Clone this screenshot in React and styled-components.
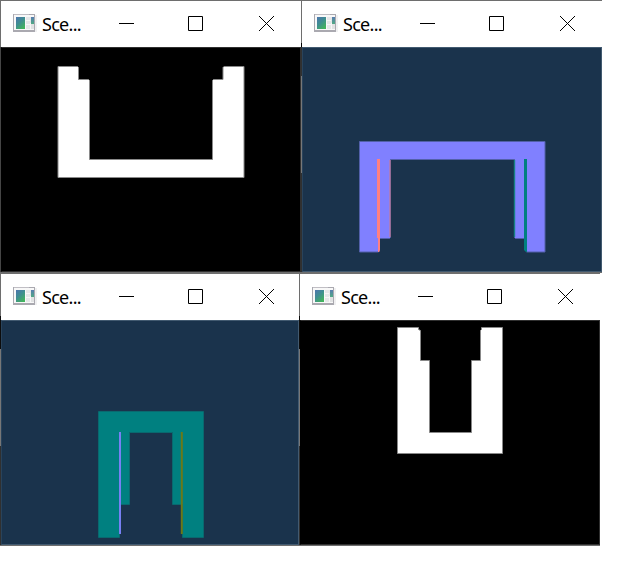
import React from 'react';
import styled, { createGlobalStyle } from 'styled-components';

const GlobalStyle = createGlobalStyle`
  body { margin: 0; background: #fff; }
`;

const Desktop = styled.main`
  display: flex;
  flex-direction: column;
  width: 620px;
  height: 572px;
  overflow: hidden;
  background: #fff;
`;

const WindowRow = styled.div`
  display: flex;
  height: 273px;
`;

const WindowFrame = styled.section`
  display: grid;
  grid-template-columns: 1px 1fr;
  box-sizing: border-box;
  width: ${({ $width }) => $width}px;
  height: 273px;
  border-top: 1px solid #6e6e6e;
  border-bottom: 1px solid ${({ $bottom }) => $bottom};
`;

const LeftEdge = styled.div`
  background: ${({ $edge }) => $edge};
`;

const WindowBody = styled.div`
  display: flex;
  flex-direction: column;
  min-width: 0;
`;

const TitleBar = styled.header`
  display: flex;
  align-items: flex-start;
  height: 46px;
  background: #fff;
`;

const AppIcon = styled.svg`
  flex: none;
  width: 24px;
  height: 19px;
  margin: 13px 5px 0 12px;
`;

const Title = styled.h1`
  flex: none;
  width: 77px;
  margin: 11px 0 0;
  font: 400 18px/25px 'Noto Sans', 'Open Sans', sans-serif;
  letter-spacing: -0.7px;
  color: #000;
`;

const Caption = styled.div`
  display: grid;
  grid-template-columns: 69px 71px 16px;
  margin-top: 15px;
`;

const CaptionIcon = styled.svg`
  display: block;
  width: 15px;
  height: 15px;
  fill: none;
  stroke: #000;
`;

const Canvas = styled.div`
  box-sizing: border-box;
  height: 225px;
  background: ${({ $dark }) => ($dark ? '#000' : '#1a334c')};
  border: 1px solid ${({ $dark }) => ($dark ? '#303030' : '#425a70')};
  border-left-color: ${({ $dark }) => ($dark ? '#000' : '#29435b')};
`;

const Drawing = styled.svg`
  display: block;
  width: 100%;
  height: 100%;
`;

function SceneIcon({ id }) {
  return (
    <AppIcon viewBox="0 0 24 19" shapeRendering="crispEdges">
      <defs>
        <linearGradient id={`${id}-view`} x1="0" y1="0" x2="0.7" y2="1">
          <stop offset="0" stopColor="#4d74ae" />
          <stop offset="0.5" stopColor="#3f8e91" />
          <stop offset="1" stopColor="#42b35d" />
        </linearGradient>
        <linearGradient id={`${id}-side`} x1="0" y1="0" x2="0" y2="1">
          <stop offset="0" stopColor="#577cb0" />
          <stop offset="1" stopColor="#50aa83" />
        </linearGradient>
      </defs>
      <rect x="22" y="1" width="2" height="17" fill="#f0f0f1" />
      <rect x="0" y="0" width="22" height="18" fill="#aaa9b0" />
      <rect x="1" y="1" width="20" height="15" fill="#f8f8f8" />
      <rect x="1" y="0" width="15" height="1" fill="#c0bec4" />
      <rect x="3" y="3" width="9" height="12" fill={`url(#${id}-view)`} />
      <rect x="13" y="3" width="5" height="12" fill="#e5e7e8" />
      <path d="M13 6.5h4M13 10.5h5M17.5 9v6" stroke="#f7f7f7" />
      <rect x="18" y="3" width="3" height="7" fill={`url(#${id}-side)`} />
      <rect x="18" y="10" width="3" height="5" fill="#e1e2e3" />
    </AppIcon>
  );
}

function CaptionButtons() {
  return (
    <Caption>
      <CaptionIcon viewBox="0 0 15 15"><path d="M0 7.5H15" /></CaptionIcon>
      <CaptionIcon viewBox="0 0 15 15"><path d="M.5 .5h14v14H.5z" /></CaptionIcon>
      <CaptionIcon viewBox="0 0 15 15"><path d="M0 0 15 15M15 0 0 15" /></CaptionIcon>
    </Caption>
  );
}

function SceneWindow({ id, width = 301, dark, edge, bottom = '#6e6e6e', view, children }) {
  return (
    <WindowFrame $width={width} $bottom={bottom}>
      <LeftEdge $edge={edge} />
      <WindowBody>
        <TitleBar>
          <SceneIcon id={id} />
          <Title>Sce...</Title>
          <CaptionButtons />
        </TitleBar>
        <Canvas $dark={dark}>
          <Drawing viewBox={view}>{children}</Drawing>
        </Canvas>
      </WindowBody>
    </WindowFrame>
  );
}

const plainEdge = 'linear-gradient(#6e6e6e 46px, #454545 46px)';
const upperEdge =
  'linear-gradient(#6e6e6e 42px, #000 42px 46px, #303030 46px 75px, #777 75px 172px, #303030 172px)';
const lowerEdge =
  'linear-gradient(#6e6e6e 42px, #0c0c0c 42px 75px, #777 75px 172px, #303030 172px)';

export default function App() {
  return (
    <>
      <GlobalStyle />
      <Desktop>
        <WindowRow>
          <SceneWindow id="top" dark edge={plainEdge} view="2 48 298 223">
            <path
              d="M58 66.5H77.5L78.5 67.5V79.5H88.5L89.5 80.5V159.5H212.5V80.5L213.5 79.5H223V67.5L224 66.5H244V177.5H58Z"
              fill="#fff"
              stroke="#8a8a8a"
            />
          </SceneWindow>
          <SceneWindow id="front" edge={upperEdge} view="303 48 298 223">
            <path
              d="M359.5 141.5H545V252H526.5V238.5H515.5L514.5 237.5V159.5H390.5V237.5L389.5 238.5H379.5V251L378.5 252H359.5Z"
              fill="#8080ff"
              stroke="#5260a9"
            />
            <path d="M377 159H380V250L379 252H378V238H377Z" fill="#ff8080" />
            <path d="M390 160V237" stroke="#d57883" />
            <path d="M514.5 160V237" stroke="#188183" strokeWidth="1.4" />
            <path d="M524 159H527V252H526L524 250Z" fill="#008080" />
          </SceneWindow>
        </WindowRow>
        <WindowRow>
          <SceneWindow id="side" width={299} edge={lowerEdge} view="2 321 296 223">
            <path
              d="M98.5 411.5H203.5V537.5H182.5V504.5H172.5V432.5H129.5V504.5H119.5V537.5H98.5Z"
              fill="#008080"
              stroke="#09696f"
            />
            <path d="M120 432V534" stroke="#7780f4" strokeWidth="2" />
            <path d="M181.8 432V534" stroke="#6b7918" strokeWidth="2" />
          </SceneWindow>
          <SceneWindow id="bottom" dark edge={lowerEdge} view="301 321 298 223">
            <path
              d="M397.5 327.5H418.5V329.5L420.5 330.5V360.5H429.5V432.5H471.5V360.5H480.5V330.5L481.5 329.5V327.5H502.5V453.5H397.5Z"
              fill="#fff"
              stroke="#888"
            />
          </SceneWindow>
        </WindowRow>
      </Desktop>
    </>
  );
}
